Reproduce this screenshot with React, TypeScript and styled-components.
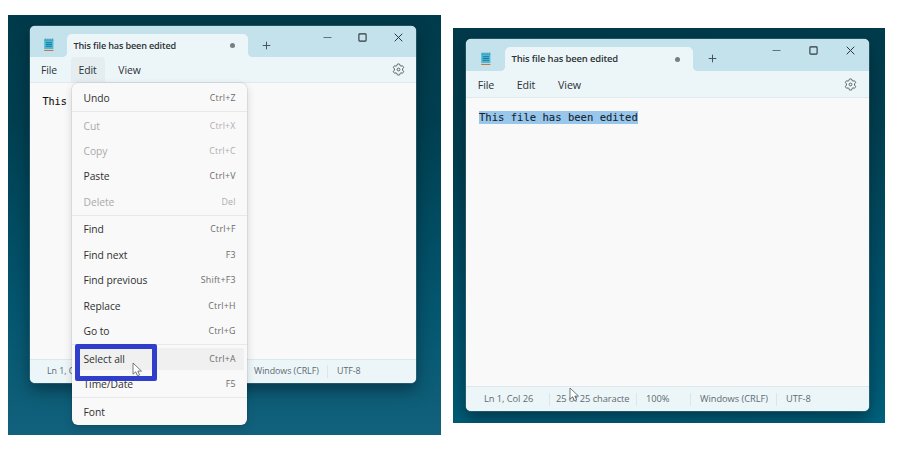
import React from "react";
import styled, { createGlobalStyle, css } from "styled-components";

const Global = createGlobalStyle`
  * { box-sizing: border-box; }
  body { margin: 0; background: #fff; overflow: hidden; font-family: "Open Sans", "Noto Sans", sans-serif; color: #2c3235; }
`;

const Page = styled.main`
  width: 900px;
  height: 450px;
  display: flex;
  align-items: flex-start;
  gap: 12px;
  padding: 15px 0 0 8px;
`;

const LeftDesktop = styled.section`
  position: relative;
  width: 433px;
  height: 420px;
  padding: 11px 0 0 22px;
  overflow: hidden;
  background: linear-gradient(180deg, #003b4b 0%, #003f50 25%, #04566f 70%, #12617c 100%);
`;

const RightDesktop = styled.section`
  position: relative;
  width: 432px;
  height: 395px;
  margin-top: 13px;
  padding: 11px 0 0 13px;
  overflow: hidden;
  background: linear-gradient(175deg, #003a4a 0%, #003f50 30%, #005069 65%, #005a73 88%, #00627d 100%);
`;

const Window = styled.article<{ $w: number; $h: number }>`
  width: ${(p) => p.$w}px;
  height: ${(p) => p.$h}px;
  display: flex;
  flex-direction: column;
  border-radius: 5px;
  overflow: hidden;
  background: #f9f9f9;
  box-shadow: 0 0 0 0.5px rgba(110, 150, 160, 0.6), 0 7px 16px rgba(0, 22, 32, 0.5);
`;

const TitleBar = styled.header<{ $h: number; $icon: number }>`
  height: ${(p) => p.$h}px;
  flex: none;
  display: flex;
  background: #c4e2eb;
  padding-left: ${(p) => p.$icon}px;
`;

const IconSlot = styled.div<{ $w: number; $top: number }>`
  width: ${(p) => p.$w}px;
  padding-top: ${(p) => p.$top}px;
  flex: none;
  svg { display: block; }
`;

const Tab = styled.div<{ $w: number }>`
  position: relative;
  width: ${(p) => p.$w}px;
  flex: none;
  margin-top: 8px;
  padding: 0 13.5px 0 6.5px;
  display: flex;
  align-items: center;
  justify-content: space-between;
  border-radius: 5px 5px 0 0;
  background: #ecf6f9;
  &::before, &::after {
    content: "";
    position: absolute;
    bottom: 0;
    width: 4px;
    height: 4px;
  }
  &::before { left: -4px; background: radial-gradient(circle at 0 0, transparent 3.6px, #ecf6f9 4px); }
  &::after { right: -4px; background: radial-gradient(circle at 100% 0, transparent 3.6px, #ecf6f9 4px); }
`;

const TabTitle = styled.span<{ $size: number; $ls: number }>`
  font-size: ${(p) => p.$size}px;
  letter-spacing: ${(p) => p.$ls}px;
  font-weight: 600;
  white-space: nowrap;
  line-height: 14px;
`;

const Dot = styled.i`
  width: 5px;
  height: 5px;
  border-radius: 50%;
  background: #777f83;
`;

const NewTab = styled.div<{ $x: number }>`
  padding: 15px 0 0 ${(p) => p.$x}px;
  flex: 1;
  svg { display: block; }
`;

const Controls = styled.div<{ $gap: number; $right: number }>`
  display: flex;
  align-items: flex-start;
  gap: ${(p) => p.$gap}px;
  padding: 7px ${(p) => p.$right}px 0 0;
  svg { display: block; }
`;

const MenuBar = styled.nav<{ $h: number }>`
  height: ${(p) => p.$h}px;
  flex: none;
  display: flex;
  align-items: center;
  background: #ecf6f9;
  border-bottom: 1px solid #dfeaed;
  padding-left: 2px;
  svg { display: block; margin-left: auto; }
`;

const BarItem = styled.span<{ $w: number; $size: number; $on?: boolean }>`
  width: ${(p) => p.$w}px;
  height: 100%;
  display: flex;
  align-items: center;
  justify-content: center;
  padding-top: 1px;
  font-size: ${(p) => p.$size}px;
  letter-spacing: -0.1px;
  ${(p) => p.$on && css`
    background: #e5edf0;
    width: ${p.$w - 9}px;
    margin: 0 5px 0 4.5px;
    border-radius: 4px 4px 0 0;
  `}
`;

const Editor = styled.div<{ $size: number; $x: number }>`
  flex: 1;
  padding: 11px 0 0 ${(p) => p.$x}px;
  font-family: "DejaVu Sans Mono", monospace;
  font-size: ${(p) => p.$size}px;
  line-height: 15px;
  color: #111;
  -webkit-text-stroke: 0.1px currentColor;
`;

const Selected = styled.span`
  display: inline-block;
  height: 13px;
  margin-top: 2px;
  line-height: 13px;
  background: #99c7ec;
  color: #14232e;
`;

const StatusBar = styled.footer<{ $h: number; $size: number }>`
  height: ${(p) => p.$h}px;
  flex: none;
  display: flex;
  align-items: center;
  background: #ecf6f9;
  border-top: 1px solid #dde8ec;
  color: #606a6f;
  font-size: ${(p) => p.$size}px;
`;

const Cell = styled.span<{ $w: number; $pad: number; $last?: boolean }>`
  width: ${(p) => p.$w}px;
  height: 13px;
  line-height: 12px;
  padding-left: ${(p) => p.$pad}px;
  white-space: nowrap;
  letter-spacing: -0.06px;
  flex: none;
  border-right: ${(p) => (p.$last ? "0" : "1px solid #dce5e9")};
`;

const Menu = styled.div`
  position: absolute;
  left: 64px;
  top: 67.5px;
  width: 175px;
  height: 342.5px;
  padding-top: 2.4px;
  border-radius: 6px;
  background: #f9f9f9;
  box-shadow: 0 0 0 0.6px rgba(0, 0, 0, 0.1), 0 3px 8px rgba(0, 0, 0, 0.16);
`;

const MenuRow = styled.div<{ $muted?: boolean; $hover?: boolean }>`
  height: 25.35px;
  margin: 0 3px;
  padding: 0 8.5px;
  display: flex;
  align-items: center;
  justify-content: space-between;
  font-size: 10.3px;
  letter-spacing: -0.06px;
  color: ${(p) => (p.$muted ? "#aaaaaa" : "#303030")};
  background: linear-gradient(${(p) => (p.$hover ? "#f0f0f0, #f0f0f0" : "transparent, transparent")}) center / 100% 22px no-repeat;
`;

const Shortcut = styled.span<{ $muted?: boolean }>`
  font-size: 8.8px;
  letter-spacing: 0.22px;
  margin-right: -0.2px;
  color: ${(p) => (p.$muted ? "#adadad" : "#6b6b6b")};
`;

const Separator = styled.div`
  height: 2.6px;
  padding-top: 0.6px;
  &::after { content: ""; display: block; height: 1px; background: #e9e9e9; }
`;

const Highlight = styled.div`
  position: absolute;
  left: 67px;
  top: 329px;
  width: 82px;
  height: 37px;
  border: 5px solid #2f3fcb;
  border-radius: 2px;
`;

const Pointer = styled.svg<{ $x: number; $y: number }>`
  position: absolute;
  left: ${(p) => p.$x}px;
  top: ${(p) => p.$y}px;
`;

const NotepadIcon = () => (
  <svg width="12" height="14" viewBox="0 0 12 14">
    <rect x="1.2" y="1.6" width="9.2" height="9.6" rx="0.5" fill="#48b9d8" />
    <path d="M1.2 11h9.2v.9H1.2z" fill="#dceef4" />
    <path d="M1.2 11.8h9.2v1.2H1.2z" fill="#c07a4a" />
    <path d="M2.8 4.7h6.2M2.8 6.5h6.2M2.8 8.3h6.2" stroke="#1d7396" strokeWidth="0.9" />
    <path d="M2.2 0.6v2M4.1 0.6v2M6 0.6v2M7.9 0.6v2M9.7 0.6v2" stroke="#2c7f9e" strokeWidth="0.9" />
  </svg>
);

const Plus = () => (
  <svg width="9" height="9" viewBox="0 0 9 9">
    <path d="M4.5 0.7v7.6M0.7 4.5h7.6" stroke="#475359" strokeWidth="1" />
  </svg>
);

const WindowControls = ({ gap, right }: { gap: number; right: number }) => (
  <Controls $gap={gap} $right={right}>
    <svg width="9" height="9" viewBox="0 0 9 9"><path d="M0.5 4.5h8" stroke="#56646a" strokeWidth="0.9" /></svg>
    <svg width="9" height="9" viewBox="0 0 9 9"><rect x="0.9" y="0.9" width="7.2" height="7.2" rx="0.8" fill="none" stroke="#2c373b" strokeWidth="1.1" /></svg>
    <svg width="9" height="9" viewBox="0 0 9 9"><path d="M0.7 0.7l7.6 7.6M8.3 0.7L0.7 8.3" stroke="#2c373b" strokeWidth="1" /></svg>
  </Controls>
);

const GearSvg = styled.svg<{ $right: number }>`
  margin-right: ${(p) => p.$right}px;
`;

const Gear = ({ right }: { right: number }) => (
  <GearSvg $right={right} width="13" height="13" viewBox="0 0 13 13" fill="none" stroke="#596266" strokeWidth="1" strokeLinejoin="round">
    <path d="M5.35 1.1Q6.5 .75 7.65 1.1L8.05 2.6Q8.6 2.85 9 3.15L10.5 2.75Q11.35 3.55 11.65 4.7L10.55 5.8V7.2L11.65 8.3Q11.35 9.45 10.5 10.25L9 9.85Q8.6 10.15 8.05 10.4L7.65 11.9Q6.5 12.25 5.35 11.9L4.95 10.4Q4.4 10.15 4 9.85L2.5 10.25Q1.65 9.45 1.35 8.3L2.45 7.2V5.8L1.35 4.7Q1.65 3.55 2.5 2.75L4 3.15Q4.4 2.85 4.95 2.6Z" />
    <circle cx="6.5" cy="6.5" r="1.4" />
  </GearSvg>
);

const Arrow = ({ x, y }: { x: number; y: number }) => (
  <Pointer $x={x} $y={y} width="11" height="15" viewBox="0 0 11 15">
    <path d="M1 1v11.2l2.7-2.4 1.8 4 2.1-.9-1.8-3.8h3.7z" fill="#fff" stroke="#555b5f" strokeWidth="0.8" strokeLinejoin="round" />
  </Pointer>
);

type Entry = { label: string; keys?: string; muted?: boolean; hover?: boolean };
const groups: Entry[][] = [
  [{ label: "Undo", keys: "Ctrl+Z" }],
  [
    { label: "Cut", keys: "Ctrl+X", muted: true },
    { label: "Copy", keys: "Ctrl+C", muted: true },
    { label: "Paste", keys: "Ctrl+V" },
    { label: "Delete", keys: "Del", muted: true },
  ],
  [
    { label: "Find", keys: "Ctrl+F" },
    { label: "Find next", keys: "F3" },
    { label: "Find previous", keys: "Shift+F3" },
    { label: "Replace", keys: "Ctrl+H" },
    { label: "Go to", keys: "Ctrl+G" },
  ],
  [
    { label: "Select all", keys: "Ctrl+A", hover: true },
    { label: "Time/Date", keys: "F5" },
  ],
  [{ label: "Font" }],
];

const EditMenu = () => (
  <Menu>
    {groups.map((group, i) => (
      <React.Fragment key={i}>
        {i > 0 && <Separator />}
        {group.map((e) => (
          <MenuRow key={e.label} $muted={e.muted} $hover={e.hover}>
            <span>{e.label}</span>
            {e.keys && <Shortcut $muted={e.muted}>{e.keys}</Shortcut>}
          </MenuRow>
        ))}
      </React.Fragment>
    ))}
  </Menu>
);

export default function App() {
  return (
    <>
      <Global />
      <Page>
        <LeftDesktop>
          <Window $w={386} $h={357}>
            <TitleBar $h={31} $icon={13}>
              <IconSlot $w={24} $top={12}><NotepadIcon /></IconSlot>
              <Tab $w={181}>
                <TabTitle $size={9.1} $ls={-0.15}>This file has been edited</TabTitle>
                <Dot />
              </Tab>
              <NewTab $x={14}><Plus /></NewTab>
              <WindowControls gap={26.5} right={13.5} />
            </TitleBar>
            <MenuBar $h={26}>
              <BarItem $w={34} $size={10.4}>File</BarItem>
              <BarItem $w={43} $size={10.4} $on>Edit</BarItem>
              <BarItem $w={40} $size={10.4}>View</BarItem>
              <Gear right={11} />
            </MenuBar>
            <Editor $size={10.15} $x={12.4}>This</Editor>
            <StatusBar $h={24} $size={8.9}>
              <Cell $w={216} $pad={17}>Ln 1, Col 1</Cell>
              <Cell $w={82} $pad={8}>Windows (CRLF)</Cell>
              <Cell $w={60} $pad={9} $last>UTF-8</Cell>
            </StatusBar>
          </Window>
          <EditMenu />
          <Highlight />
          <Arrow x={123.5} y={346.5} />
        </LeftDesktop>
        <RightDesktop>
          <Window $w={403} $h={372}>
            <TitleBar $h={32} $icon={14}>
              <IconSlot $w={25} $top={13}><NotepadIcon /></IconSlot>
              <Tab $w={188}>
                <TabTitle $size={9.45} $ls={-0.15}>This file has been edited</TabTitle>
                <Dot />
              </Tab>
              <NewTab $x={15}><Plus /></NewTab>
              <WindowControls gap={28} right={14} />
            </TitleBar>
            <MenuBar $h={27}>
              <BarItem $w={36} $size={10.7}>File</BarItem>
              <BarItem $w={44} $size={10.7}>Edit</BarItem>
              <BarItem $w={43} $size={10.7}>View</BarItem>
              <Gear right={12} />
            </MenuBar>
            <Editor $size={10.55} $x={13}><Selected>This file has been edited</Selected></Editor>
            <StatusBar $h={25} $size={9.3}>
              <Cell $w={84} $pad={18}>Ln 1, Col 26</Cell>
              <Cell $w={87} $pad={6}>25 of 25 characte</Cell>
              <Cell $w={54} $pad={9}>100%</Cell>
              <Cell $w={86} $pad={9}>Windows (CRLF)</Cell>
              <Cell $w={60} $pad={9} $last>UTF-8</Cell>
            </StatusBar>
          </Window>
          <Arrow x={115.5} y={359} />
        </RightDesktop>
      </Page>
    </>
  );
}
